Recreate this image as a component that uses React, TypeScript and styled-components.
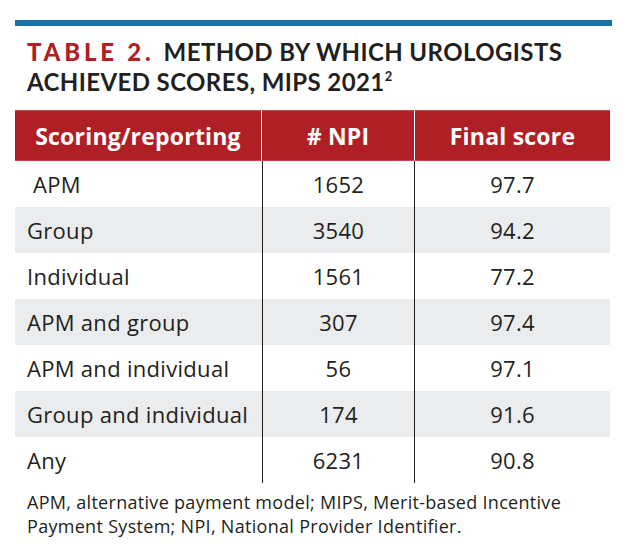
import styled, { createGlobalStyle } from "styled-components";

const GlobalStyle = createGlobalStyle`
  html, body {
    margin: 0;
    padding: 0;
    background: #ffffff;
  }
  body {
    font-family: "Open Sans", Lato, sans-serif;
    color: #231f20;
  }
`;

const Page = styled.div`
  width: 628px;
  height: 554px;
  padding: 20px 18px 0 15px;
  box-sizing: border-box;
  overflow: hidden;
`;

const TopRule = styled.div`
  width: 597px;
  height: 6px;
  background: #1b70a5;
`;

const Title = styled.h1`
  margin: 11px 0 0 12px;
  font-family: Lato, sans-serif;
  font-size: 24px;
  line-height: 30px;
  font-weight: 700;
  letter-spacing: 0.4px;
  color: #231f20;

  .label {
    color: #b01f25;
    font-weight: 900;
    letter-spacing: 3.8px;
    margin-right: 9px;
  }
  sup {
    font-size: 13px;
    line-height: 0;
    vertical-align: 10px;
  }
`;

const Grid = styled.div`
  margin-top: 13px;
  width: 595px;
  display: grid;
  grid-template-columns: 247px 153px 195px;
`;

const HeadCell = styled.div<{ $last?: boolean }>`
  height: 51px;
  box-sizing: border-box;
  background: #b01f25;
  border-top: 1px solid #c6484d;
  border-bottom: 1px solid #c6484d;
  border-right: ${(p) => (p.$last ? "none" : "1px solid #ffffff")};
  display: flex;
  align-items: center;
  justify-content: center;
  color: #ffffff;
  font-size: 23px;
  font-weight: 700;
  letter-spacing: 0.2px;
`;

const Cell = styled.div<{ $shade?: boolean; $col: number; $indent?: boolean }>`
  height: 46px;
  box-sizing: border-box;
  padding-bottom: 1px;
  background: ${(p) => (p.$shade ? "#ebeced" : "#ffffff")};
  display: flex;
  align-items: center;
  justify-content: ${(p) => (p.$col === 0 ? "flex-start" : "center")};
  padding-left: ${(p) => (p.$col === 0 ? (p.$indent ? "18px" : "12px") : "0")};
  border-left: ${(p) => (p.$col === 1 ? "1.5px solid #231f20" : "none")};
  border-right: ${(p) => (p.$col === 1 ? "1.5px solid #231f20" : "none")};
  font-size: 22px;
  font-weight: 400;
  letter-spacing: 0.3px;
  color: #231f20;
`;

const Footnote = styled.p`
  margin: 7px 0 0 12px;
  font-size: 18px;
  line-height: 24px;
  letter-spacing: 0.3px;
  color: #231f20;
`;

const rows: { method: string; npi: string; score: string; indent?: boolean }[] = [
  { method: "APM", npi: "1652", score: "97.7", indent: true },
  { method: "Group", npi: "3540", score: "94.2" },
  { method: "Individual", npi: "1561", score: "77.2" },
  { method: "APM and group", npi: "307", score: "97.4" },
  { method: "APM and individual", npi: "56", score: "97.1" },
  { method: "Group and individual", npi: "174", score: "91.6" },
  { method: "Any", npi: "6231", score: "90.8" },
];

export default function App() {
  return (
    <>
      <GlobalStyle />
      <Page>
        <TopRule />
        <Title>
          <span className="label">TABLE 2.</span>METHOD BY WHICH UROLOGISTS
          <br />
          ACHIEVED SCORES, MIPS 2021<sup>2</sup>
        </Title>
        <Grid>
          <HeadCell>Scoring/reporting</HeadCell>
          <HeadCell># NPI</HeadCell>
          <HeadCell $last>Final score</HeadCell>
          {rows.map((r, i) => {
            const shade = i % 2 === 1;
            return [
              <Cell key={r.method + "-m"} $col={0} $shade={shade} $indent={r.indent}>
                {r.method}
              </Cell>,
              <Cell key={r.method + "-n"} $col={1} $shade={shade}>
                {r.npi}
              </Cell>,
              <Cell key={r.method + "-s"} $col={2} $shade={shade}>
                {r.score}
              </Cell>,
            ];
          })}
        </Grid>
        <Footnote>
          APM, alternative payment model; MIPS, Merit-based Incentive
          <br />
          Payment System; NPI, National Provider Identifier.
        </Footnote>
      </Page>
    </>
  );
}
